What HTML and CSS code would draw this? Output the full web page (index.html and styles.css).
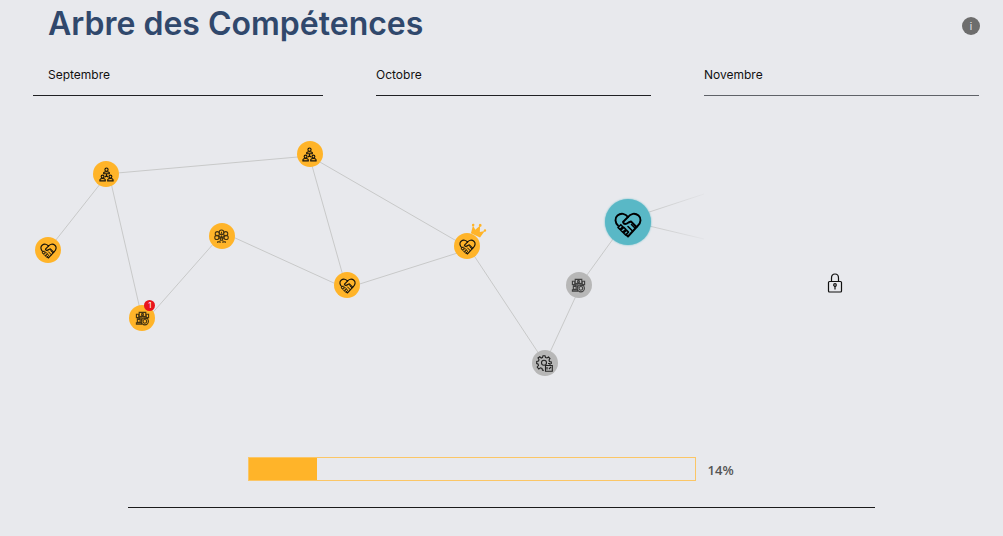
FILE: index.html
```
<!DOCTYPE html>
<html lang="fr">
<head>
<meta charset="utf-8">
<meta name="viewport" content="width=device-width, initial-scale=1">
<title>Arbre des Compétences</title>
<link rel="stylesheet" href="styles.css">
</head>
<body>
<svg class="sprite" aria-hidden="true">
  <symbol id="handshake" viewBox="0 0 28 26">
    <g fill="none" stroke="currentColor" stroke-width="1.900" stroke-linejoin="round" stroke-linecap="round">
      <path d="M4 13.500C1 10.500 .500 6 3.500 3.500C7 .500 11.500 1.500 14 5C16.500 1.500 21 .500 24.500 3.500C27.500 6 27 10.500 24 13.500L14 24.500L12 22.500"/>
      <path d="M14 5L9 10C9.500 12.500 12 12.500 14.500 10.500L17 9.500L22.500 15"/>
    </g>
    <g fill="none" stroke="currentColor" stroke-width="1.600" stroke-linejoin="round" stroke-linecap="round">
      <path d="M4 15.500L6.800 12.700L8.800 14.700L6 17.500ZM6.800 18.300L9.800 15.300L11.800 17.300L8.800 20.300ZM9.600 21L12.500 18.100L14.500 20.100L11.600 23Z"/>
      <path d="M14 14.500L18.500 19M17.500 12.500L21 16"/>
    </g>
  </symbol>
  <symbol id="team" viewBox="0 0 16 16">
    <g fill="none" stroke="currentColor" stroke-width="1.200">
      <circle cx="8" cy="2.800" r="1.700"/>
      <path d="M5 7.200V6Q5.500 5 8 5Q10.500 5 11 6V7.200ZM8 7V9.500M6 11L8 9L10 11"/>
      <circle cx="3.800" cy="10.200" r="1.500"/><circle cx="12.200" cy="10.200" r="1.500"/>
      <path d="M1 14.800V13.500Q1.500 12.300 3.800 12.300Q6.200 12.300 6.700 13.500V14.800ZM9.300 14.800V13.500Q9.800 12.300 12.200 12.300Q14.500 12.300 15 13.500V14.800Z"/>
    </g>
  </symbol>
  <symbol id="ideas" viewBox="0 0 16 16">
    <g fill="none" stroke="currentColor" stroke-width="1.100">
      <circle cx="8" cy="3.500" r="2.500"/><circle cx="3.500" cy="5" r="2.200"/><circle cx="12.500" cy="5" r="2.200"/>
      <circle cx="3" cy="9" r="2.200"/><circle cx="13" cy="9" r="2.200"/>
      <path d="M8 3V5M5 7L7 9V12M11 7L9 9V12M5 10.500Q8 6 11 10.500M6 12H10M4 15V13.500H6.500V15M9.500 15V13.500H12V15M8 7V10"/>
    </g>
  </symbol>
  <symbol id="group" viewBox="0 0 16 16">
    <g fill="none" stroke="currentColor" stroke-width="1.200">
      <path d="M4.500 1.500H11.500V6H4.500ZM6 6Q8 3.500 10 6M1.500 3.500H4V7H1.500ZM12 3.500H14.500V7H12ZM2 7.500H8M2.500 9H5.500V12H2.500ZM1.500 14V12.500H7V14ZM9 8H14"/>
      <circle cx="8" cy="3.500" r="1"/><circle cx="4" cy="8" r="1"/>
      <circle cx="10.500" cy="11" r="3.800"/><circle cx="10.500" cy="11" r="2"/>
      <path d="M6 8L8 10"/>
    </g>
  </symbol>
  <symbol id="gear" viewBox="0 0 17 17">
    <g fill="none" stroke="currentColor" stroke-width="1.100">
      <path d="M8 15.300H6.500L6 13.500L4.500 12.800L2.800 14L1.200 12L2.500 10.500L2 9L.700 8.500V6.500L2.500 6L3 4.800L2 3L3.800 1.800L5.200 3L6.500 2.500L7 .800H9L9.500 2.500L11 3L12.500 2L14 3.500L13 5L13.500 6.500L15.300 7V9"/>
      <circle cx="8" cy="7.800" r="2.500"/>
      <path d="M9.500 10.500H16.300V16.300H9.500ZM12 8.500H14V10.500M11 12V14.500M13 14L15 12"/>
    </g>
  </symbol>
  <symbol id="crown" viewBox="0 0 16 14">
    <path fill="currentColor" d="M3 13L1.500 5L5.500 8L8 2L10.500 8L14.500 5L13 13Z"/>
    <g fill="currentColor"><circle cx="1.500" cy="4.500" r="1.300"/><circle cx="8" cy="1.800" r="1.400"/><circle cx="14.500" cy="4.500" r="1.300"/></g>
  </symbol>
  <symbol id="lock" viewBox="0 0 16 20">
    <g fill="none" stroke="currentColor" stroke-width="1.200">
      <rect x="1.500" y="8.500" width="13" height="10.500" rx="1"/>
      <path d="M4.500 8V5Q4.500 1 8 1Q11.500 1 11.500 5V8"/>
      <circle cx="8" cy="12" r="1.300"/><path d="M8 13V16.500"/>
    </g>
  </symbol>
</svg>

<header class="header">
  <h1 class="title">Arbre des Compétences</h1>
  <button class="info" type="button" aria-label="Informations">i</button>
</header>

<main>
  <div class="months">
    <h2 class="month month-first">Septembre</h2>
    <h2 class="month">Octobre</h2>
    <h2 class="month month-next">Novembre</h2>
  </div>

  <section class="tree" aria-label="Compétences">
    <svg class="links" viewBox="0 0 1003 340" preserveAspectRatio="none" aria-hidden="true">
      <defs>
        <linearGradient id="fade" gradientUnits="userSpaceOnUse" x1="650" y1="0" x2="706" y2="0">
          <stop offset="0" stop-color="#c8c9c9"/><stop offset="1" stop-color="#c8c9c9" stop-opacity="0.100"/>
        </linearGradient>
      </defs>
      <path d="M48 150L108 74M109 74L142 218M106 74L309 56M148 218L222 134M222 132L347 189M309 55L347 190M306 54L467 147M347 188L467 150M467 145L545 263M545 263L581 185M579 186L626 121"/>
      <path class="fading" d="M628 119L704 94M628 121L704 139"/>
    </svg>
    <button class="node n1" type="button" aria-label="Entraide"><svg class="heart"><use href="#handshake"/></svg></button>
    <button class="node n2" type="button" aria-label="Équipe"><svg class="icon"><use href="#team"/></svg></button>
    <button class="node n3" type="button" aria-label="Groupe"><svg class="icon soft"><use href="#group"/></svg><span class="badge">1</span></button>
    <button class="node n4" type="button" aria-label="Idées"><svg class="icon soft"><use href="#ideas"/></svg></button>
    <button class="node n5" type="button" aria-label="Équipe"><svg class="icon"><use href="#team"/></svg></button>
    <button class="node n6" type="button" aria-label="Entraide"><svg class="heart"><use href="#handshake"/></svg></button>
    <button class="node n7" type="button" aria-label="Entraide"><svg class="heart"><use href="#handshake"/></svg><svg class="crown"><use href="#crown"/></svg></button>
    <button class="node locked n8" type="button" aria-label="Organisation"><svg class="gear"><use href="#gear"/></svg></button>
    <button class="node locked n9" type="button" aria-label="Groupe"><svg class="icon soft"><use href="#group"/></svg></button>
    <button class="node current n10" type="button" aria-label="Entraide"><svg class="heart-large"><use href="#handshake"/></svg></button>
    <svg class="padlock" role="img" aria-label="Verrouillé"><use href="#lock"/></svg>
  </section>

  <div class="progress">
    <div class="bar" role="progressbar" aria-label="Progression" aria-valuenow="14" aria-valuemin="0" aria-valuemax="100"><div class="fill" style="width: 15.2%"></div></div>
    <span class="percent">14%</span>
  </div>
  <hr class="rule">
</main>
</body>
</html>
```
FILE: styles.css
```
* { box-sizing: border-box; }
body {
  margin: 0;
  background: #e8e9ed;
  color: #111;
  font-family: Inter, "Liberation Sans", sans-serif;
}
.sprite { position: absolute; width: 0; height: 0; }
.header {
  display: flex;
  justify-content: space-between;
  align-items: center;
  height: 52px;
  padding: 0 23px 0 48px;
}
.title {
  margin: 0;
  padding-bottom: 4px;
  color: #30486c;
  font-size: 32px;
  line-height: 40px;
  font-weight: 600;
  white-space: nowrap;
}
.info {
  width: 18px;
  height: 18px;
  padding: 0;
  border: 0;
  border-radius: 50%;
  background: #6d6d6d;
  color: #e8e9ed;
  font: 10px/18px Inter, sans-serif;
}
.months {
  display: grid;
  grid-template-columns: repeat(3, 1fr);
  gap: 53px;
  padding: 14px 24px 0 48px;
}
.month {
  margin: 0;
  padding-bottom: 12px;
  border-bottom: 1px solid #202124;
  font-size: 12px;
  line-height: 17px;
  font-weight: 400;
}
.month-first { margin-left: -15px; padding-left: 15px; }
.month-next { border-color: #5f6268; }
.tree { position: relative; height: 340px; margin-top: 4px; }
.links { display: block; width: 100%; height: 340px; }
.links path {
  fill: none;
  stroke: #c8c9c9;
  stroke-width: 1px;
  vector-effect: non-scaling-stroke;
}
.links .fading { stroke: url(#fade); }
.node {
  position: absolute;
  display: flex;
  align-items: center;
  justify-content: center;
  width: 26px;
  height: 26px;
  margin: -13px 0 0 -13px;
  padding: 0;
  border: 0;
  border-radius: 50%;
  background: #ffb429;
  color: #17130b;
}
.n1 { left: 4.8%; top: 150px; }
.n2 { left: 10.6%; top: 74px; }
.n3 { left: 14.2%; top: 218px; }
.n4 { left: 22.1%; top: 136px; }
.n5 { left: 30.9%; top: 54px; }
.n6 { left: 34.6%; top: 185px; }
.n7 { left: 46.6%; top: 146px; }
.n8 { left: 54.3%; top: 263px; }
.n9 { left: 57.7%; top: 185px; }
.n10 { left: 62.6%; top: 122px; }
.locked { background: #b7b7b7; color: #222; }
.current {
  width: 46px;
  height: 46px;
  margin: -23px 0 0 -23px;
  background: #59b8c6;
  box-shadow: 0 0 2px #59b8c6;
  color: #000;
}
.icon { width: 15px; height: 15px; }
.soft { opacity: 0.8; }
.gear { width: 17px; height: 17px; }
.heart { width: 17px; height: 16px; margin-top: 2px; }
.heart-large { width: 28px; height: 26px; margin-top: 6px; }
.badge {
  position: absolute;
  top: -5px;
  right: 0;
  width: 11px;
  height: 11px;
  border-radius: 50%;
  background: #e8141c;
  color: #fff;
  font: 8px/11px Inter, sans-serif;
  text-align: center;
}
.crown {
  position: absolute;
  top: -10px;
  left: 16px;
  width: 16px;
  height: 14px;
  color: #ffb429;
  transform: rotate(25deg);
}
.padlock {
  position: absolute;
  left: 83.3%;
  top: 183px;
  width: 16px;
  height: 20px;
  margin: -10px 0 0 -8px;
}
.progress {
  display: flex;
  align-items: center;
  gap: 12px;
  margin: 17px 0 0 24.7%;
}
.bar {
  width: 59.3%;
  height: 24px;
  border: 1px solid #fbc666;
}
.fill { height: 100%; background: #ffb429; }
.percent {
  padding-top: 3px;
  color: #555;
  font: 600 13px/17px "Open Sans", "Noto Sans", sans-serif;
}
.rule {
  width: 74.5%;
  height: 1px;
  margin: 26px auto 0;
  border: 0;
  background: #1b1b1b;
}
```
